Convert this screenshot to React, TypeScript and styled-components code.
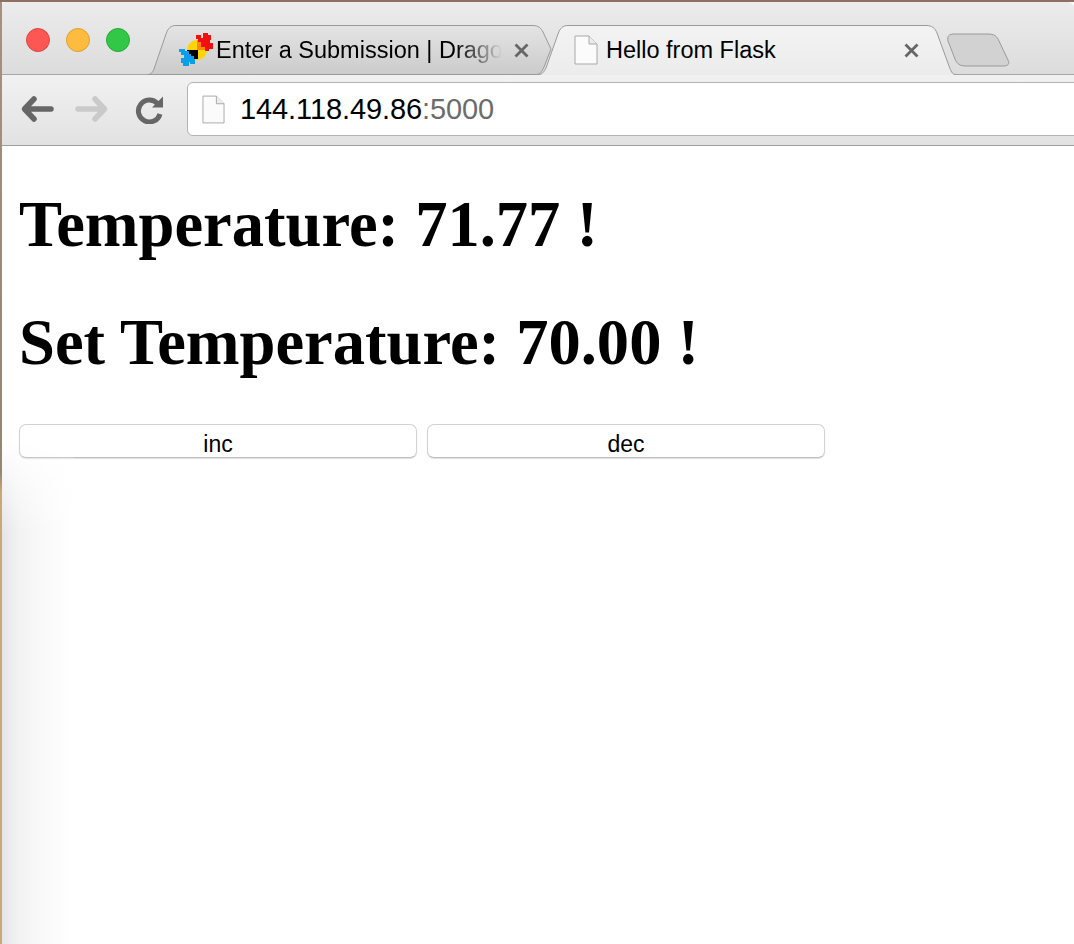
import React from "react";
import styled, { createGlobalStyle } from "styled-components";

const Global = createGlobalStyle`
  html, body { margin: 0; padding: 0; background: #fff; }
  body { font-family: "Liberation Sans", Arial, sans-serif; overflow: hidden; }
`;

const Page = styled.div`
  position: relative;
  width: 1074px;
  height: 944px;
  overflow: hidden;
  background: #fff;
  border-top: 2px solid #8f6f63;
  box-sizing: border-box;
`;

const LeftEdge = styled.div`
  position: absolute;
  left: 0;
  top: 0;
  bottom: 0;
  width: 2px;
  background: linear-gradient(180deg, #a98f80 0, #94866f 470px, #c9a878 490px, #c9a878 100%);
  z-index: 3;
`;

const LeftShadow = styled.div`
  position: absolute;
  left: 2px;
  top: 440px;
  bottom: 0;
  width: 72px;
  background: linear-gradient(90deg, #e6e6e6 0%, #f3f3f3 25%, #fafafa 60%, #ffffff 100%);
  -webkit-mask-image: linear-gradient(180deg, transparent 0, #000 90px);
  mask-image: linear-gradient(180deg, transparent 0, #000 90px);
`;

const TabStrip = styled.div`
  position: relative;
  height: 72px;
  background: linear-gradient(180deg, #ececec 0%, #dcdcdc 100%);
  border-bottom: 1px solid #a6a6a6;
  border-radius: 6px 6px 0 0;
  box-sizing: content-box;
  display: flex;
  align-items: flex-end;
`;

const Lights = styled.div`
  display: flex;
  gap: 16px;
  padding: 26px 0 0 26px;
  align-self: flex-start;
  width: 148px;
  flex: none;
  box-sizing: border-box;
`;

const Light = styled.span<{ $c: string; $b: string }>`
  width: 24px;
  height: 24px;
  flex: none;
  border-radius: 50%;
  background: ${(p) => p.$c};
  border: 1px solid ${(p) => p.$b};
  box-sizing: border-box;
`;

const Tabs = styled.div`
  display: flex;
  align-items: flex-end;
  height: 50px;
  margin-bottom: -1px;
`;

const Tab = styled.div<{ $active?: boolean; $w: number; $over?: number }>`
  position: relative;
  width: ${(p) => p.$w}px;
  height: 50px;
  margin-left: ${(p) => p.$over ?? 0}px;
  z-index: ${(p) => (p.$active ? 2 : 1)};
  display: flex;
  align-items: center;
  font-size: 23.5px;
  color: #000;
  box-sizing: border-box;
  white-space: nowrap;
`;

const TabShape = styled.svg`
  position: absolute;
  inset: 0;
  width: 100%;
  height: 100%;
`;

const TabInner = styled.div<{ $pl: number }>`
  position: relative;
  display: flex;
  align-items: center;
  width: 100%;
  height: 100%;
  padding-left: ${(p) => p.$pl}px;
  box-sizing: border-box;
`;

const TabTitle = styled.span<{ $w: number; $ml: number; $fade?: boolean }>`
  display: block;
  width: ${(p) => p.$w}px;
  overflow: hidden;
  margin-left: ${(p) => p.$ml}px;
  line-height: 50px;
  ${(p) =>
    p.$fade
      ? `-webkit-mask-image: linear-gradient(90deg, #000 84%, transparent 100%);
         mask-image: linear-gradient(90deg, #000 84%, transparent 100%);`
      : ""}
`;

const CloseMark = styled.svg`
  position: absolute;
  width: 15px;
  height: 15px;
  top: 18px;
`;

const NewTab = styled.svg`
  width: 66px;
  height: 34px;
  margin-left: -10px;
  margin-bottom: 8px;
  flex: none;
  position: relative;
  z-index: 1;
`;

const Toolbar = styled.div`
  height: 71px;
  background: linear-gradient(180deg, #f1f1f1 0%, #e2e2e2 100%);
  border-bottom: 1px solid #9c9c9c;
  display: flex;
  align-items: center;
  padding: 7px 0 9px 20px;
  box-sizing: border-box;
`;

const NavIcon = styled.svg<{ $ml?: number }>`
  width: 34px;
  height: 30px;
  margin-left: ${(p) => p.$ml ?? 0}px;
  flex: none;
`;

const Omnibox = styled.div`
  flex: 1;
  height: 54px;
  margin-left: 20px;
  margin-right: -10px;
  background: #fff;
  border: 1px solid #b4b4b4;
  border-radius: 6px;
  box-sizing: border-box;
  display: flex;
  align-items: center;
  padding-left: 14px;
`;

const Url = styled.span`
  font-size: 29px;
  letter-spacing: -0.1px;
  margin-left: 15px;
  padding-top: 1px;
  color: #000;
`;

const Port = styled.span`
  color: #6b6b6b;
`;

const Content = styled.main`
  position: relative;
  padding: 0 19px;
`;

const Heading = styled.h1`
  font-family: "Liberation Serif", "Times New Roman", serif;
  font-weight: 700;
  font-size: 64.56px;
  line-height: 74px;
  margin: 0;
  color: #000;
  padding-top: 44px;
  &:first-child { padding-top: 41px; }
`;

const Buttons = styled.div`
  display: flex;
  gap: 10px;
  margin-top: 45px;
`;

const Action = styled.button`
  width: 398px;
  height: 34px;
  background: #fff;
  border: 1px solid #d2d2d2;
  border-bottom-color: #bdbdbd;
  border-radius: 7px;
  box-shadow: 0 1px 1px rgba(0, 0, 0, 0.12);
  font-family: "Liberation Sans", Arial, sans-serif;
  font-size: 23px;
  color: #000;
  padding: 5px 0 0;
  line-height: 28px;
`;

const Doc = ({ w = 24, h = 30 }: { w?: number; h?: number }) => (
  <svg width={w} height={h} viewBox="0 0 24 30" style={{ flex: "none" }}>
    <path d="M1 1H15L23 9V29H1Z" fill="#fbfbfb" stroke="#a8a8a8" strokeWidth="1" />
    <path d="M15 1V9H23" fill="#ececec" stroke="#a8a8a8" strokeWidth="1" />
  </svg>
);

const Close = ({ left }: { left: number }) => (
  <CloseMark viewBox="0 0 15 15" style={{ left }}>
    <path d="M1.5 1.5L13.5 13.5M13.5 1.5L1.5 13.5" stroke="#666" strokeWidth="2.8" />
  </CloseMark>
);

const Favicon = () => (
  <svg width="36" height="34" viewBox="0 0 36 34" style={{ flex: "none" }}>
    <circle cx="19" cy="17" r="10" fill="#ffd400" />
    <path d="M19 17V7A10 10 0 0 1 29 17Z" fill="#ff8a00" />
    <path d="M20 17V26H14L9 20V17Z" fill="#000" />
    <g shapeRendering="crispEdges">
      <path d="M18 2h5v3h2V0h5v2h3v5h-1v3h3v6h-4v2h-4v-4h-4V9h-3V6h-2z" fill="#f01010" />
      <path d="M1 16h6v2h4v3h2v2h3v3h1v5h-5v-2h-1v4H5v-3H3v-5h3v-3H3v-3H1z" fill="#0a9fe8" />
    </g>
  </svg>
);

export default function App() {
  return (
    <Page>
      <Global />
      <TabStrip>
        <Lights>
          <Light $c="#fc5753" $b="#df4744" />
          <Light $c="#fdbc40" $b="#de9f34" />
          <Light $c="#33c748" $b="#27aa35" />
        </Lights>
        <Tabs>
          <Tab $w={404}>
            <TabShape viewBox="0 0 404 50" preserveAspectRatio="none">
              <defs>
                <linearGradient id="bg1" x1="0" y1="0" x2="0" y2="1">
                  <stop offset="0" stopColor="#e4e4e4" />
                  <stop offset="1" stopColor="#cbcbcb" />
                </linearGradient>
              </defs>
              <path
                d="M0 49.5C3 49.5 5 47 6 44L18 9C20 3 23 0.5 28 0.5H385C390 0.5 393 3 395 7L403 24L396 42C394 47 392 49.5 388 49.5Z"
                fill="url(#bg1)"
                stroke="#9a9a9a"
              />
            </TabShape>
            <TabInner $pl={30}>
              <Favicon />
              <TabTitle $w={286} $ml={2} $fade>Enter a Submission | Drago</TabTitle>
              <Close left={366} />
            </TabInner>
          </Tab>
          <Tab $active $w={418} $over={-14}>
            <TabShape viewBox="0 0 418 50" preserveAspectRatio="none">
              <defs>
                <linearGradient id="bg2" x1="0" y1="0" x2="0" y2="1">
                  <stop offset="0" stopColor="#f3f3f3" />
                  <stop offset="1" stopColor="#ececec" />
                </linearGradient>
              </defs>
              <path
                d="M0 50C4 50 6 47 8 43L20 9C22 3 25 0.5 30 0.5H388C394 0.5 397 3 399 8L411 41C413 46 414 50 418 50Z"
                fill="url(#bg2)"
              />
              <path
                d="M0 49.5C4 49.5 6 47 8 43L20 9C22 3 25 0.5 30 0.5H388C394 0.5 397 3 399 8L411 41C413 46 414 49.5 418 49.5"
                fill="none"
                stroke="#9a9a9a"
              />
            </TabShape>
            <TabInner $pl={36}>
              <Doc />
              <TabTitle $w={200} $ml={8}>Hello from Flask</TabTitle>
              <Close left={366} />
            </TabInner>
          </Tab>
          <NewTab viewBox="0 0 66 34">
            <path
              d="M2 8C1 3 3 1 8 1H42C48 1 51 3 53 8L62 27C64 31 62 33 57 33H20C14 33 11 31 9 26Z"
              fill="#d2d2d2"
              stroke="#9a9a9a"
            />
          </NewTab>
        </Tabs>
      </TabStrip>
      <Toolbar>
        <NavIcon viewBox="0 0 34 30">
          <path d="M14 5L4.5 15L14 25M5 15H31" fill="none" stroke="#666" strokeWidth="5.5" strokeLinecap="round" strokeLinejoin="round" />
        </NavIcon>
        <NavIcon $ml={21} viewBox="0 0 34 30">
          <path d="M20 5L29.5 15L20 25M29 15H3" fill="none" stroke="#cacaca" strokeWidth="5.5" strokeLinecap="round" strokeLinejoin="round" />
        </NavIcon>
        <NavIcon $ml={24} viewBox="0 0 34 30">
          <path d="M24.5 9.5A11 11 0 1 0 27 20" fill="none" stroke="#666" strokeWidth="5" />
          <path d="M19 13.5H30V2.5Z" fill="#666" />
        </NavIcon>
        <Omnibox>
          <Doc w={23} h={31} />
          <Url>144.118.49.86<Port>:5000</Port></Url>
        </Omnibox>
      </Toolbar>
      <Content>
        <Heading>Temperature: 71.77 !</Heading>
        <Heading>Set Temperature: 70.00 !</Heading>
        <Buttons>
          <Action>inc</Action>
          <Action>dec</Action>
        </Buttons>
      </Content>
      <LeftEdge />
      <LeftShadow />
    </Page>
  );
}
